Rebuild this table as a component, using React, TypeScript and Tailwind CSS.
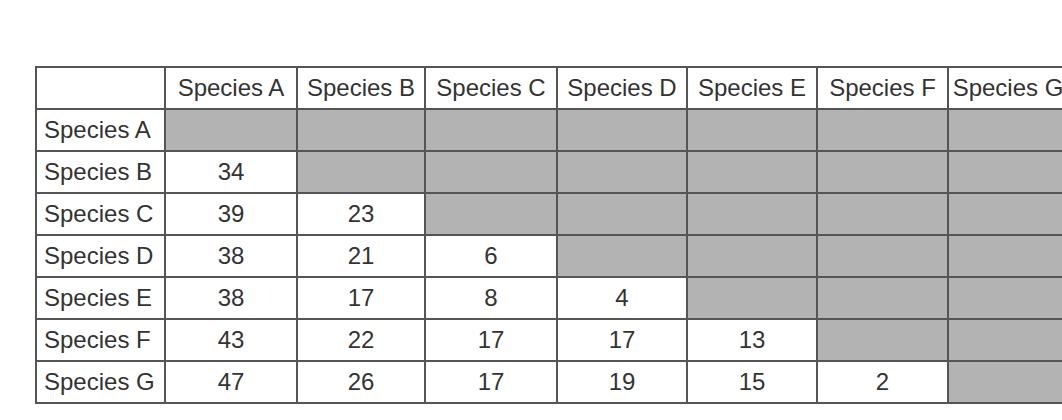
const species = ['A', 'B', 'C', 'D', 'E', 'F', 'G'];

// lower triangle of pairwise differences, row by row
const values: number[][] = [
  [],
  [34],
  [39, 23],
  [38, 21, 6],
  [38, 17, 8, 4],
  [43, 22, 17, 17, 13],
  [47, 26, 17, 19, 15, 2],
];

export default function App() {
  return (
    <div className="w-[1062px] h-[420px] overflow-hidden bg-white font-['Liberation_Sans',Arial,sans-serif] text-[#333]">
      {/* caption line, cut off by the top of the frame */}
      <p className="-mt-[25px] h-[24px] pl-[238px] text-[24px] leading-[24px] text-[#3c8f3c] whitespace-nowrap">
        species <span className="ml-[12px]">displaying</span>
      </p>

      <div className="mt-[67px] ml-[35px] w-max grid grid-cols-[127px_130px_126px_130px_128px_128px_129px_118px] auto-rows-[40px] gap-[2px] p-[2px] bg-[#555] text-[24px] leading-none">
        <div className="bg-white" />
        {species.map((s) => (
          <div key={s} className="bg-white flex items-center justify-center whitespace-nowrap">
            Species {s}
          </div>
        ))}

        {species.map((row, r) => (
          <RowCells key={row} label={row} index={r} />
        ))}
      </div>
    </div>
  );
}

function RowCells({ label, index }: { label: string; index: number }) {
  return (
    <>
      <div className="bg-white flex items-center pl-[7px] whitespace-nowrap">Species {label}</div>
      {species.map((_, c) =>
        c < index ? (
          <div key={c} className="bg-white flex items-center justify-center">
            {values[index][c]}
          </div>
        ) : (
          <div key={c} className="bg-[#b3b3b3]" />
        )
      )}
    </>
  );
}
